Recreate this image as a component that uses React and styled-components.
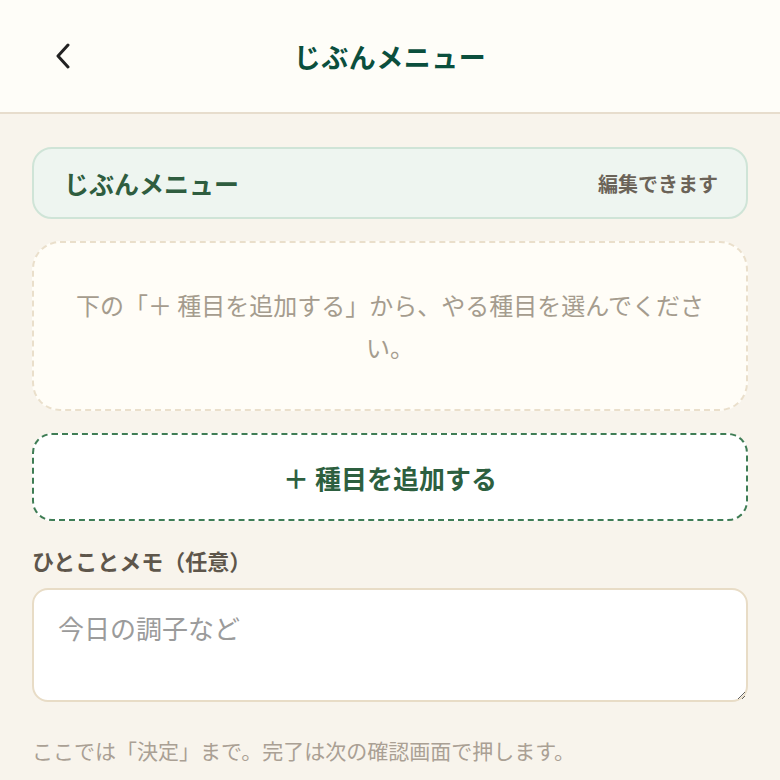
import React from "react";
import styled, { createGlobalStyle } from "styled-components";

const GlobalStyle = createGlobalStyle`
  html, body {
    margin: 0;
    padding: 0;
    background: #f8f4ec;
  }
  body {
    font-family: "Noto Sans CJK JP", "Noto Sans", sans-serif;
    -webkit-font-smoothing: antialiased;
  }
  * {
    box-sizing: border-box;
  }
`;

const Page = styled.div`
  min-height: 780px;
  background: #f8f4ec;
`;

const Header = styled.header`
  position: relative;
  height: 114px;
  display: flex;
  align-items: center;
  justify-content: center;
  background: #fefdf8;
  border-bottom: 2px solid #e7ddcd;
`;

const BackButton = styled.button`
  position: absolute;
  left: 44px;
  top: 50%;
  transform: translateY(-50%);
  width: 40px;
  height: 40px;
  padding: 0;
  border: none;
  background: none;
  display: flex;
  align-items: center;
  justify-content: center;
  color: #222;
  cursor: pointer;
`;

const Title = styled.h1`
  margin: 0;
  font-size: 27px;
  font-weight: 700;
  color: #0b4f3d;
  letter-spacing: 0.5px;
`;

const Main = styled.main`
  padding: 33px 32px 20px;
  display: flex;
  flex-direction: column;
`;

const MenuHeader = styled.div`
  height: 72px;
  display: flex;
  align-items: center;
  justify-content: space-between;
  padding: 0 28px 0 30px;
  background: #eef5f0;
  border: 2px solid #cfe4d7;
  border-radius: 20px;
`;

const MenuTitle = styled.span`
  font-size: 25px;
  font-weight: 700;
  color: #2f5d3f;
`;

const EditHint = styled.span`
  font-size: 20px;
  font-weight: 700;
  color: #6b6358;
`;

const EmptyBox = styled.div`
  margin-top: 22px;
  height: 170px;
  display: flex;
  align-items: center;
  justify-content: center;
  padding: 0 34px;
  background: #fffdf7;
  border: 2px dashed #eadfcb;
  border-radius: 28px;
  text-align: center;
  font-size: 24px;
  line-height: 42px;
  color: #a59c8e;
`;

const AddButton = styled.button`
  margin-top: 22px;
  height: 88px;
  width: 100%;
  display: flex;
  align-items: center;
  justify-content: center;
  background: #ffffff;
  border: 2px dashed #3f7d55;
  border-radius: 20px;
  font-family: inherit;
  font-size: 26px;
  font-weight: 700;
  color: #2d5f3f;
  cursor: pointer;
`;

const FieldLabel = styled.label`
  margin-top: 23px;
  font-size: 22px;
  line-height: 32px;
  font-weight: 700;
  color: #5e564b;
`;

const Memo = styled.textarea`
  margin-top: 12px;
  height: 114px;
  width: 100%;
  padding: 18px 24px;
  background: #ffffff;
  border: 2px solid #e8dcc6;
  border-radius: 16px;
  font-family: inherit;
  font-size: 26px;
  line-height: 40px;
  color: #333;
  resize: vertical;
  outline: none;

  &::placeholder {
    color: #9b9b9b;
  }
`;

const Note = styled.p`
  margin: 33px 0 0;
  font-size: 21px;
  line-height: 30px;
  color: #aaa094;
`;

function ChevronLeft() {
  return (
    <svg width="20" height="26" viewBox="0 0 20 26" fill="none">
      <path
        d="M14 2 L4 13 L14 24"
        stroke="currentColor"
        strokeWidth="3"
        strokeLinecap="round"
        strokeLinejoin="round"
      />
    </svg>
  );
}

export default function App() {
  return (
    <Page>
      <GlobalStyle />
      <Header>
        <BackButton aria-label="戻る">
          <ChevronLeft />
        </BackButton>
        <Title>じぶんメニュー</Title>
      </Header>
      <Main>
        <MenuHeader>
          <MenuTitle>じぶんメニュー</MenuTitle>
          <EditHint>編集できます</EditHint>
        </MenuHeader>
        <EmptyBox>
          下の「＋ 種目を追加する」から、やる種目を選んでください。
        </EmptyBox>
        <AddButton>＋ 種目を追加する</AddButton>
        <FieldLabel htmlFor="memo">ひとことメモ（任意）</FieldLabel>
        <Memo id="memo" placeholder="今日の調子など" />
        <Note>ここでは「決定」まで。完了は次の確認画面で押します。</Note>
      </Main>
    </Page>
  );
}
